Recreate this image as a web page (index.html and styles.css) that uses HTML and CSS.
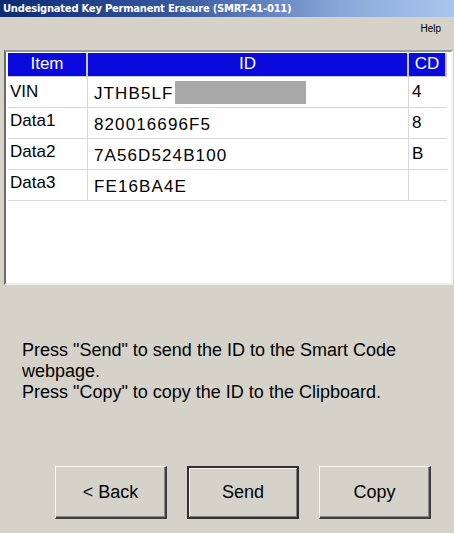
FILE: index.html
```html
<!DOCTYPE html>
<html>
<head>
<meta charset="utf-8">
<link rel="stylesheet" href="styles.css">
</head>
<body>
<div class="window">
  <div class="titlebar">Undesignated Key Permanent Erasure (SMRT-41-011)</div>
  <div class="menubar"><span class="help">Help</span></div>
  <div class="panel">
    <div class="grid">
      <div class="hcell">Item</div>
      <div class="hcell">ID</div>
      <div class="hcell">CD</div>

      <div class="cell label">VIN</div>
      <div class="cell id">JTHB5LF<span class="mask"></span></div>
      <div class="cell cd">4</div>

      <div class="cell label up">Data1</div>
      <div class="cell id">820016696F5</div>
      <div class="cell cd">8</div>

      <div class="cell label up">Data2</div>
      <div class="cell id">7A56D524B100</div>
      <div class="cell cd">B</div>

      <div class="cell label up">Data3</div>
      <div class="cell id">FE16BA4E</div>
      <div class="cell cd"></div>
    </div>
  </div>
  <div class="message">
    <p>Press "Send" to send the ID to the Smart Code webpage.</p>
    <p>Press "Copy" to copy the ID to the Clipboard.</p>
  </div>
  <div class="buttons">
    <button class="btn">&lt; Back</button>
    <button class="btn default">Send</button>
    <button class="btn">Copy</button>
  </div>
</div>
</body>
</html>
```
FILE: styles.css
```css
html, body {
  margin: 0;
  padding: 0;
  background: #d5d2ca;
}
.window {
  width: 454px;
  height: 533px;
  background: #d5d2ca;
  font-family: "Liberation Sans", Arial, sans-serif;
  color: #000;
  display: flex;
  flex-direction: column;
}
.titlebar {
  height: 17px;
  line-height: 17px;
  padding-left: 3px;
  font-family: "DejaVu Sans", sans-serif;
  font-weight: bold;
  font-size: 10px;
  letter-spacing: -0.25px;
  color: #fff;
  background: linear-gradient(to right, #0c2a72 0%, #3a5aa0 40%, #8aa8d8 75%, #a9c6ee 100%);
  white-space: nowrap;
}
.menubar {
  height: 33px;
  display: flex;
  justify-content: flex-end;
}
.help {
  font-size: 10px;
  margin-top: 6px;
  margin-right: 13px;
}
.panel {
  margin-left: 4px;
  width: 442px;
  height: 230px;
  background: #fff;
  border-left: 2px solid #6a6a6a;
  border-top: 2px solid #9a9a9a;
  border-right: 2px solid #f4f4f4;
  border-bottom: 2px solid #f0efe9;
  padding: 1px 1px 0 2px;
}
.grid {
  display: grid;
  grid-template-columns: 80px 321px 38px;
  grid-template-rows: 24px 31px 31px 31px 31px;
}
.hcell {
  background: #0a0ade;
  color: #fff;
  font-size: 17px;
  text-align: center;
  line-height: 22px;
  border-right: 2px solid #c8c8c8;
  border-bottom: 1px solid #c8c8c8;
}
.hcell:last-child {
  border-right: none;
}
.cell {
  border-right: 1px solid #d8d8d8;
  border-bottom: 1px solid #d8d8d8;
  font-size: 17px;
  white-space: nowrap;
  display: flex;
  align-items: center;
}
.label {
  padding-left: 2px;
}
.label.up {
  align-items: flex-start;
  padding-top: 3px;
}
.id {
  padding-left: 6px;
  letter-spacing: 1.1px;
  padding-top: 4px;
}
.cd {
  padding-left: 3px;
  border-right: none;
}
.mask {
  display: inline-block;
  width: 131px;
  height: 23px;
  background: #a8a8a8;
  margin-left: 1px;
  margin-top: -4px;
}
.message {
  margin-top: 55px;
  padding-left: 22px;
  padding-right: 30px;
  font-size: 18px;
  line-height: 21px;
}
.message p {
  margin: 0;
}
.buttons {
  margin-top: 63px;
  display: flex;
  padding-left: 55px;
  gap: 20px;
}
.btn {
  width: 112px;
  height: 53px;
  background: #d5d2ca;
  font-family: "Liberation Sans", Arial, sans-serif;
  font-size: 18px;
  color: #000;
  border-top: 1px solid #f8f8f8;
  border-left: 1px solid #f8f8f8;
  border-right: 2px solid #404040;
  border-bottom: 2px solid #404040;
  box-shadow: inset -1px -1px 0 #8a8a8a;
  padding: 0;
}
.btn.default {
  border: 2px solid #303030;
  box-shadow: inset 1px 1px 0 #f4f4f4, inset -1px -1px 0 #808080;
}
```
